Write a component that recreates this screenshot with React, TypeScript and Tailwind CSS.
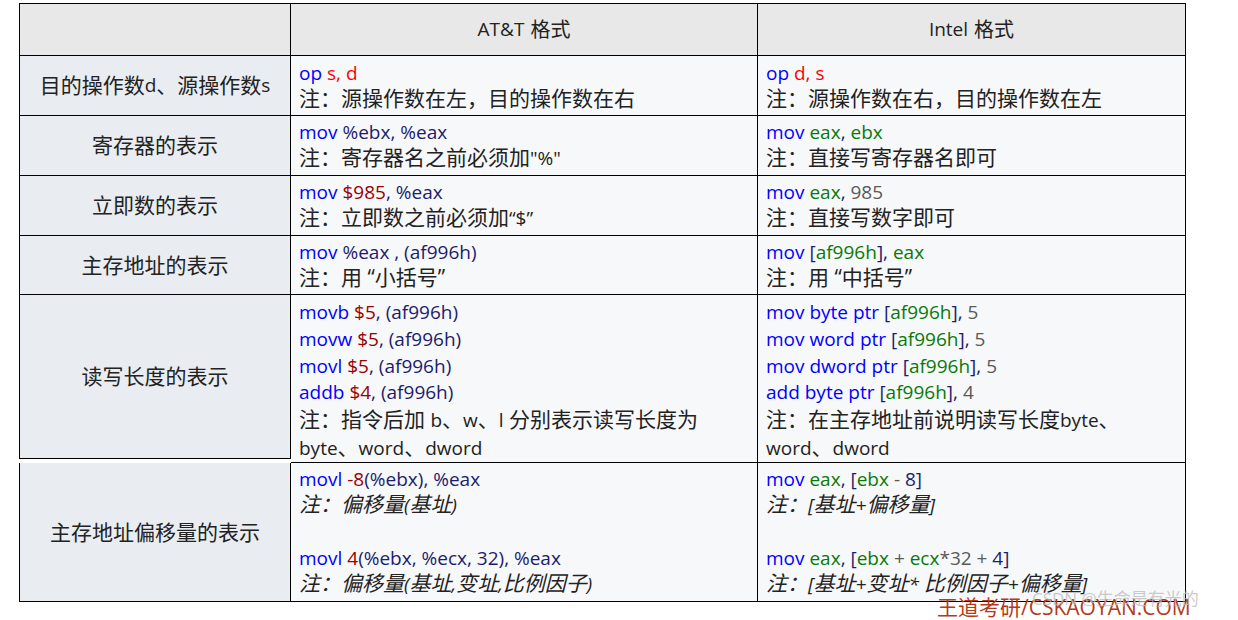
const B = "text-[#0000ff]";
const N = "text-[#1c1c6e]";
const R = "text-[#9a0000]";
const G = "text-[#087a08]";
const Y = "text-[#595959]";
const RED = "text-[#ff0000]";

const S = ({ c, children }: { c: string; children: React.ReactNode }) => <span className={c}>{children}</span>;
const L = ({ children }: { children: React.ReactNode }) => <span className="text-[19px]">{children}</span>;

function Cell({ children, cls = "" }: { children?: React.ReactNode; cls?: string }) {
  return <div className={`border-r border-b border-black px-[8px] ${cls}`}>{children}</div>;
}
function Label({ t, h }: { t: React.ReactNode; h: string }) {
  return <div className={`border-r border-b border-l border-black bg-[#e9ecf0] flex items-center justify-center text-[#222] text-[21px] ${h}`}>{t}</div>;
}
const note = "text-[#222] text-[21px] leading-[25px] whitespace-nowrap";

export default function App() {
  return (
    <div className="w-[1238px] h-[620px] bg-white relative overflow-hidden text-[19px] leading-[25px]" style={{ fontFamily: '"Open Sans","Noto Sans CJK SC",sans-serif' }}>
      <div className="absolute left-[19px] top-[3px] grid grid-cols-[272px_467px_428px] border-t border-black">
        <div className="h-[52px] bg-[#e8e8e8] border-l border-r border-b border-black" />
        <div className="h-[52px] bg-[#e8e8e8] border-r border-b border-black flex items-center justify-center text-[#222]">AT&T <span className="text-[20px] ml-[6px]">格式</span></div>
        <div className="h-[52px] bg-[#e8e8e8] border-r border-b border-black flex items-center justify-center text-[#222]">Intel <span className="text-[20px] ml-[6px]">格式</span></div>

        <Label t={<>目的操作数<L>d</L>、源操作数<L>s</L></>} h="h-[60px]" />
        <Cell cls="bg-[#f7f8fa] pt-[5px]"><div><S c={B}>op </S><S c={RED}>s, d</S></div><div className={note}>注：源操作数在左，目的操作数在右</div></Cell>
        <Cell cls="bg-[#f7f8fa] pt-[5px]"><div><S c={B}>op </S><S c={RED}>d, s</S></div><div className={note}>注：源操作数在右，目的操作数在左</div></Cell>

        <Label t="寄存器的表示" h="h-[60px]" />
        <Cell cls="bg-[#f7f8fa] pt-[4px]"><div><S c={B}>mov </S><S c={N}>%ebx, %eax</S></div><div className={note}>注：寄存器名之前必须加<L>"%"</L></div></Cell>
        <Cell cls="bg-[#f7f8fa] pt-[4px]"><div><S c={B}>mov </S><S c={G}>eax</S><S c={N}>, </S><S c={G}>ebx</S></div><div className={note}>注：直接写寄存器名即可</div></Cell>

        <Label t="立即数的表示" h="h-[60px]" />
        <Cell cls="bg-[#f7f8fa] pt-[4px]"><div><S c={B}>mov </S><S c={R}>$985</S><S c={N}>, %eax</S></div><div className={note}>注：立即数之前必须加<L>“$”</L></div></Cell>
        <Cell cls="bg-[#f7f8fa] pt-[4px]"><div><S c={B}>mov </S><S c={G}>eax</S><S c={N}>, </S><S c={Y}>985</S></div><div className={note}>注：直接写数字即可</div></Cell>

        <Label t="主存地址的表示" h="h-[59px]" />
        <Cell cls="bg-[#f7f8fa] pt-[4px]"><div><S c={B}>mov </S><S c={N}>%eax , (af996h)</S></div><div className={note}>注：用 “小括号”</div></Cell>
        <Cell cls="bg-[#f7f8fa] pt-[4px]"><div><S c={B}>mov </S><S c={N}>[</S><S c={G}>af996h</S><S c={N}>], </S><S c={G}>eax</S></div><div className={note}>注：用 “中括号”</div></Cell>

        <Label t="读写长度的表示" h="h-[164px]" />
        <Cell cls="bg-[#f7f8fa] pt-[4px]">
          <div className="leading-[27px]"><S c={B}>movb </S><S c={R}>$5</S><S c={N}>, (af996h)</S></div>
          <div className="leading-[27px]"><S c={B}>movw </S><S c={R}>$5</S><S c={N}>, (af996h)</S></div>
          <div className="leading-[27px]"><S c={B}>movl </S><S c={R}>$5</S><S c={N}>, (af996h)</S></div>
          <div><S c={B}>addb </S><S c={R}>$4</S><S c={N}>, (af996h)</S></div>
          <div className={`${note} leading-[28px]`}>注：指令后加 <L>b</L>、<L>w</L>、<L>l</L> 分别表示读写长度为</div>
          <div className={`${note} leading-[27px]`}><L>byte</L>、<L>word</L>、<L>dword</L></div>
        </Cell>
        <Cell cls="bg-[#f7f8fa] pt-[4px]">
          <div className="leading-[27px]"><S c={B}>mov byte ptr </S><S c={N}>[</S><S c={G}>af996h</S><S c={N}>], </S><S c={Y}>5</S></div>
          <div className="leading-[27px]"><S c={B}>mov word ptr </S><S c={N}>[</S><S c={G}>af996h</S><S c={N}>], </S><S c={Y}>5</S></div>
          <div className="leading-[27px]"><S c={B}>mov dword ptr </S><S c={N}>[</S><S c={G}>af996h</S><S c={N}>], </S><S c={Y}>5</S></div>
          <div><S c={B}>add byte ptr </S><S c={N}>[</S><S c={G}>af996h</S><S c={N}>], </S><S c={Y}>4</S></div>
          <div className={`${note} leading-[28px]`}>注：在主存地址前说明读写长度<L>byte</L>、</div>
          <div className={`${note} leading-[27px]`}><L>word</L>、<L>dword</L></div>
        </Cell>

        <Label t="主存地址偏移量的表示" h="h-[139px]" />
        <Cell cls="bg-[#f7f8fa] pt-[4px]">
          <div><S c={B}>movl </S><S c={R}>-8</S><S c={N}>(%ebx), %eax</S></div>
          <div className={`${note} italic`}>注：偏移量<L>(</L>基址<L>)</L></div>
          <div className="h-[28px]" />
          <div><S c={B}>movl </S><S c={R}>4</S><S c={N}>(%ebx, %ecx, 32), %eax</S></div>
          <div className={`${note} italic`}>注：偏移量<L>(</L>基址<L>,</L>变址<L>,</L>比例因子<L>)</L></div>
        </Cell>
        <Cell cls="bg-[#f7f8fa] pt-[4px]">
          <div><S c={B}>mov </S><S c={G}>eax</S><S c={N}>, [</S><S c={G}>ebx</S><S c={Y}> - </S><S c={N}>8]</S></div>
          <div className={`${note} italic`}>注：<L>[</L>基址<L>+</L>偏移量<L>]</L></div>
          <div className="h-[28px]" />
          <div><S c={B}>mov </S><S c={G}>eax</S><S c={N}>, [</S><S c={G}>ebx</S><S c={Y}> + </S><S c={G}>ecx</S><S c={Y}>*32 + </S><S c={N}>4]</S></div>
          <div className={`${note} italic`}>注：<L>[</L>基址<L>+</L>变址<L>* </L>比例因子<L>+</L>偏移量<L>]</L></div>
        </Cell>
      </div>
      <div className="absolute left-[937px] top-[594px] text-[21px] leading-[26px] text-[#b33a1a]">王道考研/CSKAOYAN.COM</div>
      <div className="absolute left-[1032px] top-[588px] text-[17px] leading-[22px] text-[#bdbdbd]/80">CSDN @生命是有光的</div>
    </div>
  );
}
